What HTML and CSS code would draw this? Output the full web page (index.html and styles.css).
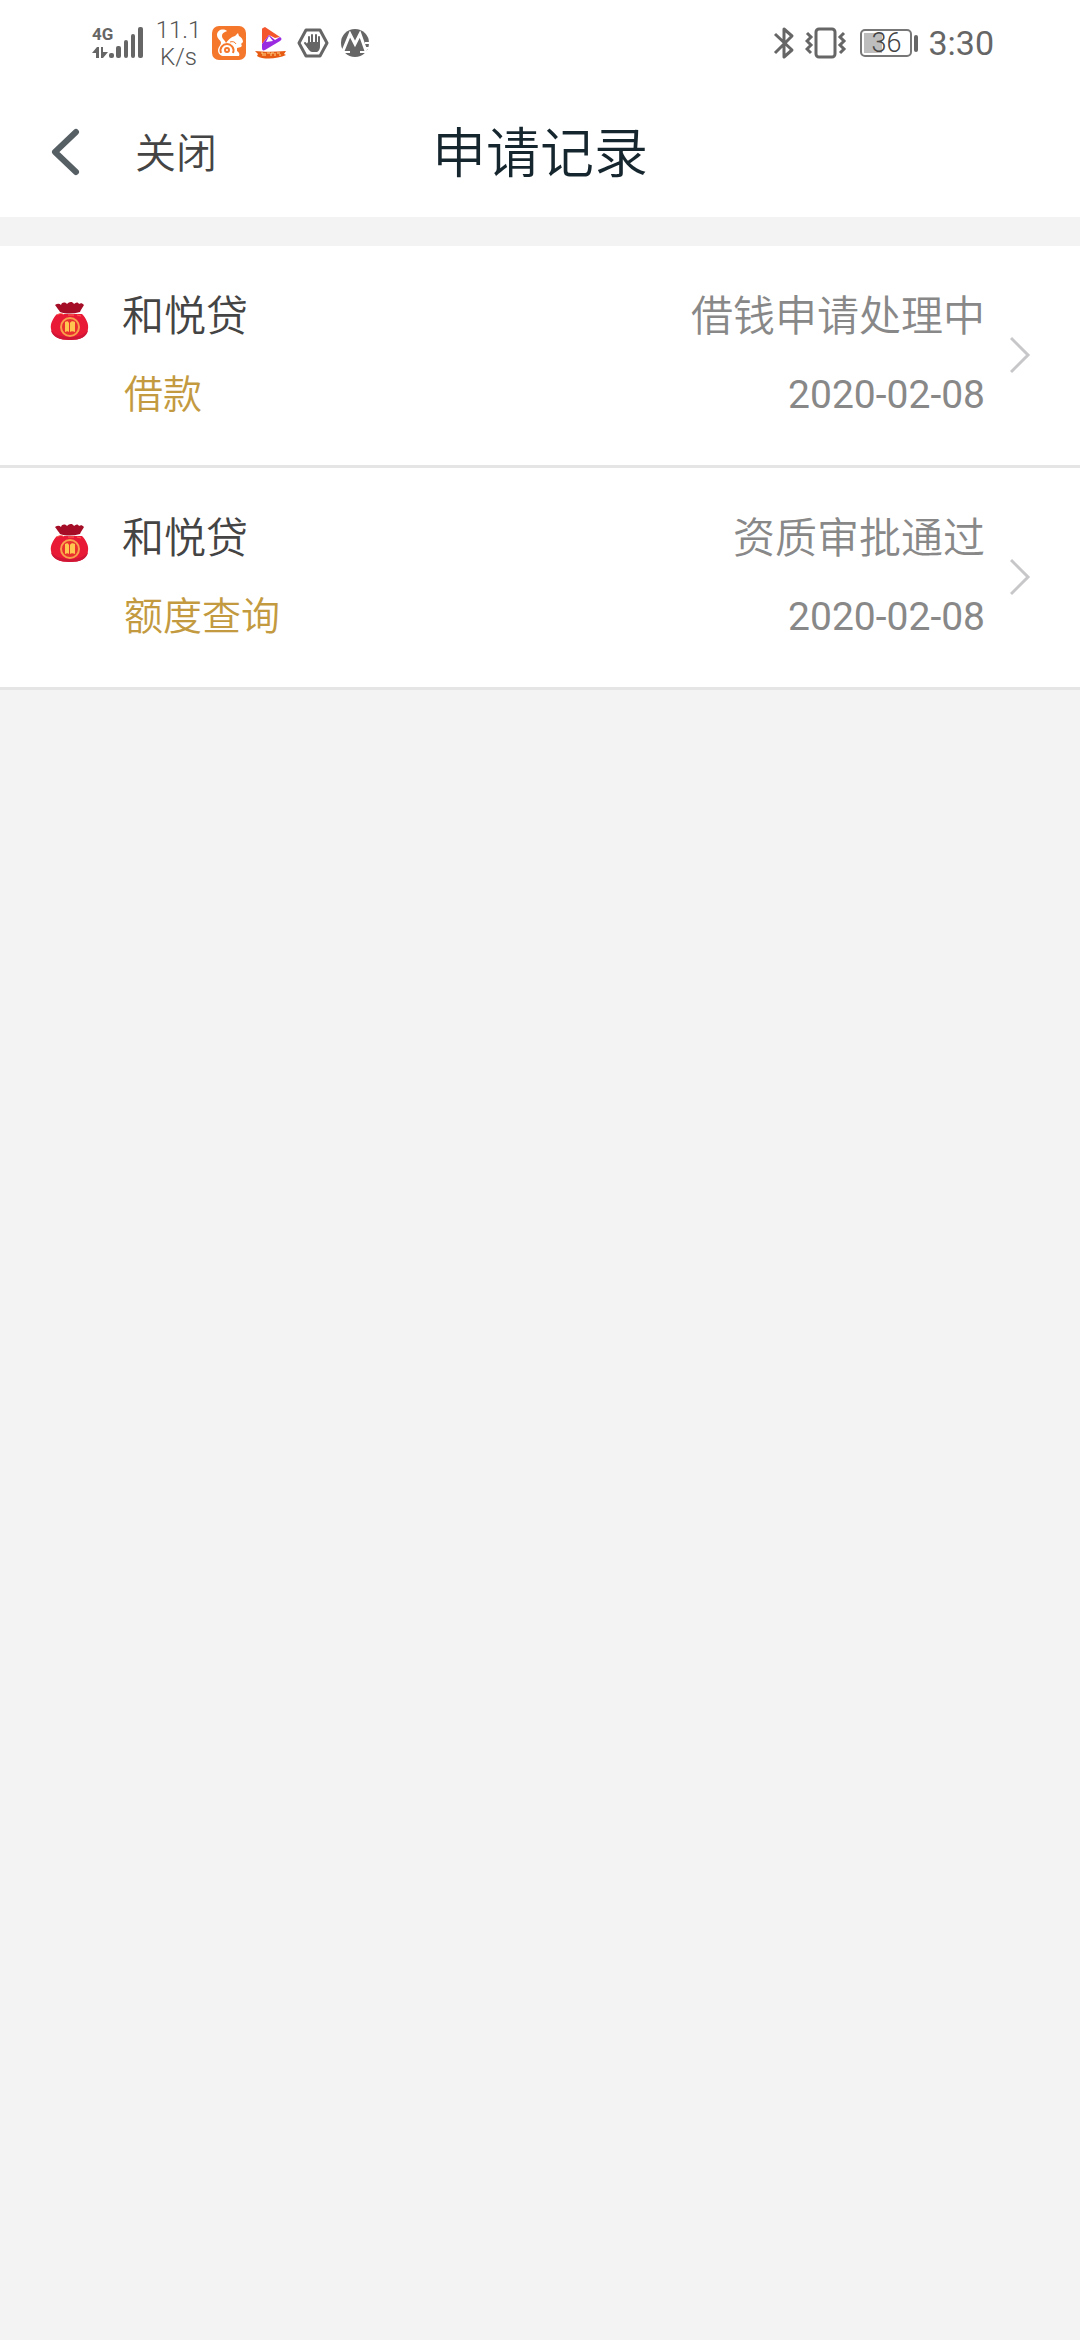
FILE: index.html
```html
<!DOCTYPE html>
<html lang="zh-CN">
<head>
<meta charset="utf-8">
<meta name="viewport" content="width=device-width, initial-scale=1">
<title>申请记录</title>
<link rel="stylesheet" href="styles.css">
</head>
<body>
<svg class="defs" aria-hidden="true">
  <symbol id="bag" viewBox="0 0 42 42">
    <path d="M9 13C5 17 2 23 3 28c1 8 9 11 19 11s17-3 18-11c1-5-2-11-6-15z" fill="#e91a36"/>
    <path d="M3 29c1 7 9 10 19 10s17-3 18-10c-4 5-10 7-18 7S7 34 3 29z" fill="#d01636"/>
    <path d="M7 4c2-1 4-2 6 0 1-3 4-3 6-1 2-2 5-3 7 0 2-2 4-2 5 0 2-1 3-1 5 1-1 2-3 4-4 7-7 2-14 2-20 0-1-2-3-4-5-7z" fill="#a50d26"/>
    <path d="M9 14c3-2 5-2 7 0m4 0h6m3 0 4 1" fill="none" stroke="#ff6550"/>
    <circle cx="22" cy="26" r="9" fill="#e9302f" stroke="#f8a04b" stroke-width="2"/>
    <path d="M17 21c2-1 3-1 4 1v9c-1-1-2-1-4 0zM22 22c1-2 3-2 5-1v10c-2-1-4-1-5 0z" fill="#ffc750"/>
  </symbol>
  <symbol id="chevron" viewBox="0 0 22 40">
    <path d="M1 2 18 19 1 36" fill="none" stroke="#c7c7c9" stroke-width="3"/>
  </symbol>
</svg>

<div class="status-bar">
  <div class="status-left">
    <div class="signal">
      <span class="network">4G</span>
      <svg class="signal-bars" viewBox="0 0 52 34" aria-hidden="true">
        <g fill="#666">
          <path d="M0 27 5 21h2v11H4v-5zM9 21h2v5h5l-5 6H9z"/>
          <rect x="17" y="27" width="5" height="5" rx="2"/>
          <rect x="24" y="20" width="5" height="12" rx="2"/>
          <rect x="32" y="14" width="4" height="18" rx="2"/>
          <rect x="39" y="8" width="4" height="24" rx="2"/>
          <rect x="46" y="1" width="5" height="31" rx="2"/>
        </g>
      </svg>
    </div>
    <div class="net-speed"><span>11.1</span><span>K/s</span></div>
    <svg class="app-icon" viewBox="0 0 34 34" aria-hidden="true">
      <rect width="34" height="34" rx="7" fill="#f5772b"/>
      <path d="M15 5C11 2 5 4 5 9c0 4 4 5 4 8 0 2-3 4-3 7 0 4 3 6 6 6h15c1-2 0-4-2-5v-3l4-1c1-1 1-2 0-3l2-2c0-3-2-5-4-6l-1-3-3 3c-4 1-7 4-9 7-1-3-4-4-4-7 0-3 3-4 5-5z" fill="#fff"/>
      <path d="M9 27c-2-5 2-9 6-9s8 4 6 9" fill="none" stroke="#f5772b" stroke-width="2"/>
      <circle cx="15" cy="24" r="2" fill="none" stroke="#f5772b" stroke-width="2"/>
      <path d="M18 16c3-1 5 0 6 2" fill="none" stroke="#f5772b"/>
    </svg>
    <svg class="app-icon" viewBox="0 0 34 34" aria-hidden="true">
      <path d="M9 2c-1 0-1 1-1 2v14l7-9 6 3 5-1L11 1z" fill="#f4552c"/>
      <path d="m26 11c2 1 2 3 0 4L11 24c-2 1-3 0-3-2v-4l7-9 6 5z" fill="#9a2be0"/>
      <path d="m15 10 4 5-7 1z" fill="#fff"/>
      <path d="M1 25c8 1 20 1 31 0l-2 3 2 1c-8 4-23 5-29 1l1-2z" fill="#e65a12"/>
      <path d="M7 27h2v3m2-3v3m2-3h3m1 3v-3h3m1 0v3m2-3h3m-1 2h2" stroke="#ffd98f" fill="none"/>
    </svg>
    <svg class="app-icon" viewBox="0 0 34 34" aria-hidden="true">
      <path d="M10 4h14l7 13-7 13H10L3 17z" fill="none" stroke="#666" stroke-width="3" stroke-linejoin="round"/>
      <path d="M13 18v-7m3 7V9m4 9V9m3 9v-7M9 17l5 6" stroke="#666" stroke-width="2" stroke-linecap="round"/>
      <path d="M12 16h12v4c0 4-2 6-4 6h-4c-2 0-4-3-6-7z" fill="#666"/>
    </svg>
    <svg class="app-icon" viewBox="0 0 34 34" aria-hidden="true">
      <circle cx="17" cy="17" r="14" fill="#666"/>
      <path d="M5 25 12 8l5 10 5-10 6 17" fill="none" stroke="#fff" stroke-width="3"/>
      <path d="M4 26h8m10 0h7M27 17h6M28 22h5" stroke="#fff" stroke-width="2"/>
    </svg>
  </div>
  <div class="status-right">
    <svg class="bluetooth" viewBox="0 0 22 34" aria-hidden="true">
      <path d="M2 8 19 24l-8 7V3l8 7L2 27" fill="none" stroke="#666" stroke-width="3" stroke-linejoin="round"/>
    </svg>
    <svg class="vibrate" viewBox="0 0 42 34" aria-hidden="true">
      <rect x="11" y="3" width="19" height="28" rx="3" fill="none" stroke="#666" stroke-width="3"/>
      <path d="M2 7l4 4-4 4 4 4-4 4 4 4M39 7l-4 4 4 4-4 4 4 4-4 4" fill="none" stroke="#666" stroke-width="3"/>
    </svg>
    <div class="battery"><span class="battery-body">36</span><span class="battery-tip"></span></div>
    <time class="clock">3:30</time>
  </div>
</div>

<header class="nav">
  <div class="nav-actions">
    <button class="back" type="button" aria-label="返回">
      <svg viewBox="0 0 30 50" aria-hidden="true"><path d="M26 5 5 25l21 20" fill="none" stroke="#565f64" stroke-width="6" stroke-linecap="round" stroke-linejoin="round"/></svg>
    </button>
    <button class="close" type="button">关闭</button>
  </div>
  <h1 class="title">申请记录</h1>
</header>

<main>
  <ul class="records">
    <li>
      <a class="record" href="#record-1">
        <svg class="bag" aria-hidden="true"><use href="#bag"/></svg>
        <span class="info"><span class="name">和悦贷</span><span class="kind">借款</span></span>
        <span class="result"><span class="state">借钱申请处理中</span><time class="date" datetime="2020-02-08">2020-02-08</time></span>
        <svg class="chevron" aria-hidden="true"><use href="#chevron"/></svg>
      </a>
    </li>
    <li>
      <a class="record" href="#record-2">
        <svg class="bag" aria-hidden="true"><use href="#bag"/></svg>
        <span class="info"><span class="name">和悦贷</span><span class="kind">额度查询</span></span>
        <span class="result"><span class="state">资质审批通过</span><time class="date" datetime="2020-02-08">2020-02-08</time></span>
        <svg class="chevron" aria-hidden="true"><use href="#chevron"/></svg>
      </a>
    </li>
  </ul>
</main>
</body>
</html>
```
FILE: styles.css
```css
* {
  box-sizing: border-box;
}

body {
  margin: 0;
  min-height: 100vh;
  background: #f3f3f3;
  color: #444;
  font-family: Roboto, "Noto Sans CJK SC DemiLight", "Noto Sans CJK SC", sans-serif;
  font-weight: 350;
}

svg {
  display: block;
  flex: none;
}

.defs {
  display: none;
}

.status-bar {
  display: flex;
  justify-content: space-between;
  align-items: center;
  height: 86px;
  padding: 0 86px 0 92px;
  background: #fff;
  color: #666;
}

.status-left,
.status-right {
  display: flex;
  align-items: center;
}

.status-left {
  gap: 8px;
}

.signal {
  display: grid;
  width: 52px;
}

.network,
.signal-bars {
  grid-area: 1 / 1;
}

.network {
  font-size: 17px;
  line-height: 17px;
  font-weight: 700;
}

.signal-bars {
  width: 52px;
  height: 34px;
}

.net-speed {
  display: flex;
  flex-direction: column;
  align-items: center;
  width: 52px;
  padding: 1px 0 0 1px;
  color: #555;
  font-size: 24px;
  line-height: 27px;
}

.app-icon {
  width: 34px;
  height: 34px;
}

.status-right {
  gap: 10px;
}

.bluetooth {
  width: 22px;
  height: 34px;
}

.vibrate {
  width: 42px;
  height: 34px;
}

.battery {
  display: flex;
  align-items: center;
  gap: 2px;
  margin-left: 3px;
}

.battery-body {
  width: 52px;
  height: 28px;
  border: 2px solid #777;
  border-radius: 5px;
  background: linear-gradient(to right, #bdbdbd 18px, transparent 18px) no-repeat 2px 2px / 44px 20px;
  color: #444;
  font-size: 27px;
  line-height: 25px;
  text-align: center;
}

.battery-tip {
  width: 4px;
  height: 17px;
  border-radius: 2px;
  background: #666;
}

.clock {
  font-size: 34px;
  line-height: 40px;
  font-weight: 400;
}

.nav {
  display: grid;
  grid-template-columns: 1fr auto 1fr;
  align-items: center;
  height: 131px;
  background: #fff;
}

.nav-actions {
  display: flex;
  align-items: center;
  gap: 55px;
  padding-left: 50px;
}

button {
  padding: 0;
  border: 0;
  background: none;
  color: #444;
  font: inherit;
}

.back svg {
  width: 30px;
  height: 50px;
}

.close {
  padding-top: 4px;
  font-size: 41px;
  line-height: 60px;
}

.title {
  margin: 0;
  padding-top: 6px;
  color: #16262e;
  font-size: 54px;
  line-height: 80px;
  font-weight: 350;
}

.records {
  margin: 29px 0 0;
  padding: 0;
  list-style: none;
}

.record {
  display: flex;
  align-items: center;
  padding: 41px 48px 40px;
  border-bottom: 3px solid #e5e5e5;
  background: #fff;
  color: #444;
  text-decoration: none;
}

.bag {
  width: 42px;
  height: 42px;
  align-self: flex-start;
  margin: 14px 32px 0 0;
}

.info,
.result {
  display: flex;
  flex-direction: column;
  gap: 18px;
  line-height: 60px;
}

.info {
  flex: 1;
}

.result {
  align-items: flex-end;
  color: #888;
}

.name,
.state {
  font-size: 42px;
}

.kind,
.date {
  font-size: 39px;
}

.kind {
  padding-left: 2px;
  color: #c39a40;
}

.date {
  font-weight: 400;
}

.chevron {
  width: 22px;
  height: 40px;
  margin-left: 25px;
}
```
